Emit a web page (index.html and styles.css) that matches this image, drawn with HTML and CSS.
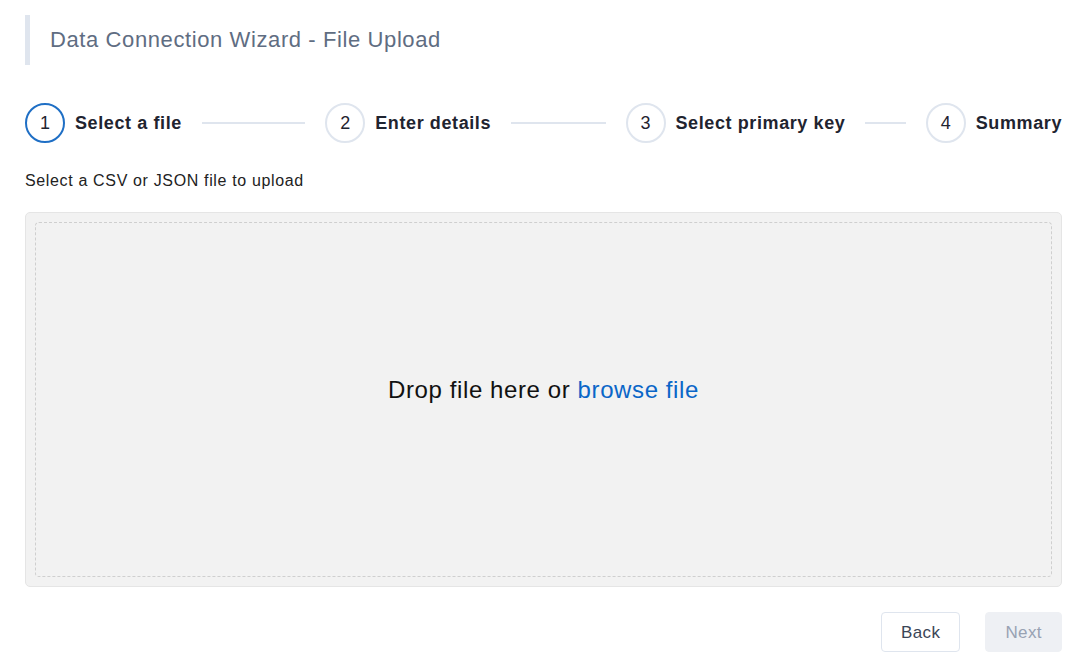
FILE: index.html
```html
<!DOCTYPE html>
<html>
<head>
<meta charset="utf-8">
<link rel="stylesheet" href="styles.css">
</head>
<body>
<div class="page">
  <div class="title-bar"><h1 class="title">Data Connection Wizard - File Upload</h1></div>
  <div class="steps">
    <div class="step active"><span class="num">1</span><span class="label">Select a file</span><span class="line"></span></div>
    <div class="step"><span class="num">2</span><span class="label">Enter details</span><span class="line"></span></div>
    <div class="step"><span class="num">3</span><span class="label">Select primary key</span><span class="line"></span></div>
    <div class="step last"><span class="num">4</span><span class="label">Summary</span></div>
  </div>
  <p class="hint">Select a CSV or JSON file to upload</p>
  <div class="dropzone">
    <div class="dropzone-inner">
      <span class="drop-text">Drop file here or <a class="browse" href="#">browse file</a></span>
    </div>
  </div>
  <div class="actions">
    <button class="btn btn-back">Back</button>
    <button class="btn btn-next" disabled>Next</button>
  </div>
</div>
</body>
</html>
```
FILE: styles.css
```css
* { box-sizing: border-box; }
html, body { margin: 0; padding: 0; background: #fff; }
body { font-family: "Liberation Sans", Arial, sans-serif; color: #1f2430; }
.page { padding: 15px 17px 0 25px; }
.title-bar {
  border-left: 5px solid #dfe5ee;
  height: 50px;
  display: flex;
  align-items: center;
  padding-left: 20px;
}
.title { margin: 0; font-size: 22px; font-weight: 400; color: #5f6d82; letter-spacing: 0.6px; }
.steps {
  display: flex;
  align-items: center;
  margin-top: 38px;
  height: 40px;
}
.step { display: flex; align-items: center; flex: 1; }
.step.last { flex: 0 0 auto; }
.num {
  flex: 0 0 40px;
  width: 40px; height: 40px;
  border-radius: 50%;
  border: 2px solid #dfe5ee;
  display: flex; align-items: center; justify-content: center;
  font-size: 18px; color: #1f2430;
  margin-right: 10px;
}
.step.active .num { border-color: #1f6fc5; }
.label { font-size: 18px; font-weight: 700; color: #1f2430; letter-spacing: 0.6px; white-space: nowrap; }
.line { flex: 1; height: 2px; background: #dfe5ee; margin: 0 20px; }
.hint { margin: 29px 0 0; font-size: 16px; color: #222; line-height: 18px; letter-spacing: 0.65px; }
.dropzone {
  margin-top: 22px;
  height: 375px;
  background: #f2f2f2;
  border: 1px solid #e5e5e5;
  border-radius: 5px;
  padding: 9px;
}
.dropzone-inner {
  height: 100%;
  border: 1px dashed #cfcfcf;
  border-radius: 4px;
  display: flex; align-items: center; justify-content: center;
  padding-bottom: 20px;
}
.drop-text { font-size: 24px; color: #111; letter-spacing: 0.6px; }
.browse { color: #0a66c8; text-decoration: none; }
.actions { display: flex; justify-content: flex-end; gap: 25px; margin-top: 25px; }
.btn {
  height: 40px;
  border-radius: 4px;
  font-family: inherit;
  font-size: 17px;
  padding: 2px 19px 0;
  letter-spacing: 0.4px;
}
.btn-back { background: #fff; border: 1px solid #dfe5ee; color: #3b4556; }
.btn-next { background: #eef0f4; border: 1px solid #eef0f4; color: #98a2b3; }
```
